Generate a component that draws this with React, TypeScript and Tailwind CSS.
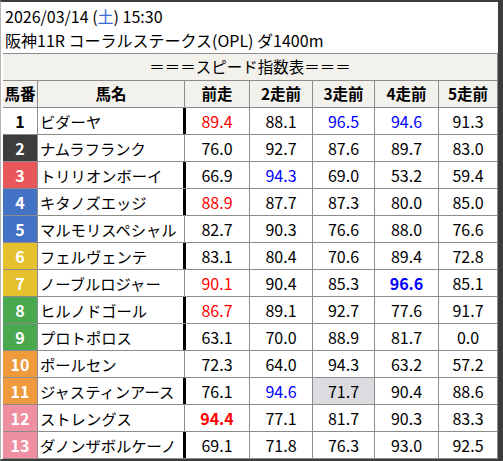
import React from "react";

type Val = { t: string; c?: "r" | "b"; bold?: boolean; bg?: boolean };

interface Horse {
  n: number;
  name: string;
  bar: boolean;
  vals: Val[];
}

const v = (t: string, c?: "r" | "b", bold?: boolean, bg?: boolean): Val => ({ t, c, bold, bg });

const horses: Horse[] = [
  { n: 1, name: "ビダーヤ", bar: true, vals: [v("89.4", "r"), v("88.1"), v("96.5", "b"), v("94.6", "b"), v("91.3")] },
  { n: 2, name: "ナムラフランク", bar: false, vals: [v("76.0"), v("92.7"), v("87.6"), v("89.7"), v("83.0")] },
  { n: 3, name: "トリリオンボーイ", bar: true, vals: [v("66.9"), v("94.3", "b"), v("69.0"), v("53.2"), v("59.4")] },
  { n: 4, name: "キタノズエッジ", bar: true, vals: [v("88.9", "r"), v("87.7"), v("87.3"), v("80.0"), v("85.0")] },
  { n: 5, name: "マルモリスペシャル", bar: false, vals: [v("82.7"), v("90.3"), v("76.6"), v("88.0"), v("76.6")] },
  { n: 6, name: "フェルヴェンテ", bar: true, vals: [v("83.1"), v("80.4"), v("70.6"), v("89.4"), v("72.8")] },
  { n: 7, name: "ノーブルロジャー", bar: false, vals: [v("90.1", "r"), v("90.4"), v("85.3"), v("96.6", "b", true), v("85.1")] },
  { n: 8, name: "ヒルノドゴール", bar: true, vals: [v("86.7", "r"), v("89.1"), v("92.7"), v("77.6"), v("91.7")] },
  { n: 9, name: "プロトポロス", bar: true, vals: [v("63.1"), v("70.0"), v("88.9"), v("81.7"), v("0.0")] },
  { n: 10, name: "ポールセン", bar: false, vals: [v("72.3"), v("64.0"), v("94.3"), v("63.2"), v("57.2")] },
  { n: 11, name: "ジャスティンアース", bar: true, vals: [v("76.1"), v("94.6", "b"), v("71.7", undefined, false, true), v("90.4"), v("88.6")] },
  { n: 12, name: "ストレングス", bar: false, vals: [v("94.4", "r", true), v("77.1"), v("81.7"), v("90.3"), v("83.3")] },
  { n: 13, name: "ダノンザボルケーノ", bar: true, vals: [v("69.1"), v("71.8"), v("76.3"), v("93.0"), v("92.5")] },
];

// 枠番 colours: horse number -> gate
const gateClass: Record<number, string> = {
  1: "bg-white text-black",
  2: "bg-[#3d3d3d] text-white",
  3: "bg-[#e8575a] text-white",
  4: "bg-[#4472c4] text-white",
  5: "bg-[#4472c4] text-white",
  6: "bg-[#e5c02f] text-white",
  7: "bg-[#e5c02f] text-white",
  8: "bg-[#4aa84f] text-white",
  9: "bg-[#4aa84f] text-white",
  10: "bg-[#ef9a3c] text-white",
  11: "bg-[#ef9a3c] text-white",
  12: "bg-[#ef8fa2] text-white",
  13: "bg-[#ef8fa2] text-white",
};

const heads = ["馬番", "馬名", "前走", "2走前", "3走前", "4走前", "5走前"];

export default function App() {
  return (
    <div
      className="box-border w-[503px] h-[461px] overflow-hidden bg-white border-t-2 border-b-2 border-r-[5px] border-l border-t-[#3c3c3c] border-r-[#3c3c3c] border-b-[#3c3c3c] border-l-[#b4b4b4] pl-[2px] text-black"
      style={{ fontFamily: '"Noto Sans CJK JP", "Noto Sans", sans-serif' }}
    >
      {/* title */}
      <div className="h-[51px] pt-[2px] pl-[2px] text-[16px] leading-[24px]">
        <div>
          2026/03/14 (<span className="text-[#3d6bd6]">土</span>) 15:30
        </div>
        <div>阪神11R コーラルステークス(OPL) ダ1400m</div>
      </div>

      <div className="grid grid-cols-[34px_146px_64px_62px_61px_63px_58px] gap-px bg-[#8c8c8c] border-t border-b border-r border-[#8c8c8c] text-[16px]">
        <div className="col-span-7 h-[26px] flex items-center justify-center bg-[#f3f1ec] text-[15.5px]">
          ＝＝＝スピード指数表＝＝＝
        </div>

        {heads.map((h) => (
          <div key={h} className="h-[26px] flex items-center justify-center bg-[#f3f1ec] font-bold text-[15.5px]">
            {h}
          </div>
        ))}

        {horses.map((hs) => (
          <React.Fragment key={hs.n}>
            <div className={`h-[26px] flex items-center justify-center font-bold ${gateClass[hs.n]}`}>
              {hs.n}
            </div>
            <div className="h-[26px] flex items-center pl-[2px] bg-white whitespace-nowrap overflow-hidden text-[15.3px]">
              {hs.name}
            </div>
            {hs.vals.map((val, i) => (
              <div
                key={i}
                className={`relative h-[26px] flex items-center justify-center ${val.bg ? "bg-[#dcdce0]" : "bg-white"} ${
                  val.c === "r" ? "text-[#ff0000]" : val.c === "b" ? "text-[#0000ff]" : ""
                } ${val.bold ? "font-bold" : ""}`}
              >
                {i === 0 && hs.bar && <span className="absolute left-[-2px] top-0 h-full w-[3px] bg-black" />}
                {val.t}
              </div>
            ))}
          </React.Fragment>
        ))}
      </div>
    </div>
  );
}
